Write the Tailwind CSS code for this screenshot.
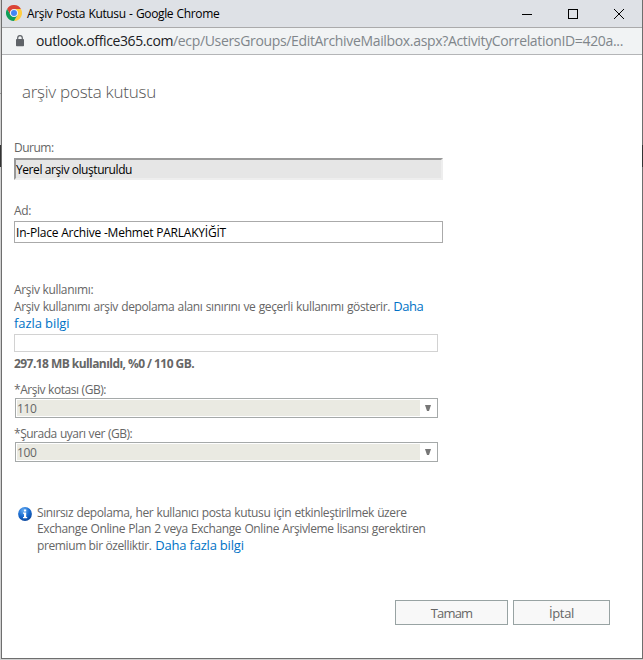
<!DOCTYPE html>
<html lang="tr">
<head>
<meta charset="utf-8">
<title>Arşiv Posta Kutusu</title>
<script src="https://cdn.jsdelivr.net/npm/@tailwindcss/browser@4"></script>
</head>
<body class="bg-white font-['Open_Sans','Noto_Sans',sans-serif]">
<div class="relative flex h-[660px] w-[643px] flex-col border-b border-l border-[#d0d0d0] bg-white">
  <div class="absolute top-[145px] -left-px h-[22px] w-px bg-[#333]"></div>
  <div class="absolute top-[93px] -left-px h-px w-px bg-[#999]"></div>
  <div class="absolute top-[145px] right-0 z-10 h-[22px] w-px bg-[#333]"></div>
  <div class="flex h-[659px] w-[642px] flex-col border-x border-b border-[#6e6e6e]">
    <header class="flex h-[28px] shrink-0 items-start border-b border-[#aaaaab] bg-[#dee1e6] pl-1">
      <svg class="mt-[5px] h-4 w-4 shrink-0" viewBox="0 0 48 48">
        <path fill="#db4437" d="M3.2 12A24 24 0 0 1 44.8 12H24A12 12 0 0 0 13.6 30Z"/>
        <path fill="#ffcd40" d="M44.8 12A24 24 0 0 1 24 48L34.4 30A12 12 0 0 0 24 12Z"/>
        <path fill="#0f9d58" d="M24 48A24 24 0 0 1 3.2 12L13.6 30A12 12 0 0 0 34.4 30Z"/>
        <circle cx="24" cy="24" r="11.5" fill="#f1f1f1"/>
        <circle cx="24" cy="24" r="9" fill="#4285f4"/>
      </svg>
      <h1 class="mt-[6px] ml-[5px] grow text-[12px] leading-4 tracking-[-0.36px] [word-spacing:0.6px] whitespace-nowrap text-black">Arşiv Posta Kutusu - Google Chrome</h1>
      <svg class="mt-2 mr-[17px] h-3 w-[104px] shrink-0" viewBox="0 0 104 12" fill="none" stroke="#000">
        <path d="M1 6.5H11M47.5 1.5H56.5V10.5H47.5Z" shape-rendering="crispEdges"/>
        <path d="M93 1L103 11M103 1L93 11"/>
      </svg>
    </header>
    <div class="flex h-[27px] shrink-0 items-start border-b border-[#b4b5b7] bg-[#f1f3f4] text-[14px] leading-5 whitespace-nowrap">
      <svg class="mt-[7px] ml-[14px] h-[12px] w-[8px] shrink-0" viewBox="0 0 8 12">
        <path d="M1.7 5V3A2.3 2.3 0 0 1 6.3 3V5" fill="none" stroke="#5f6368" stroke-width="1.2"/>
        <rect y="4" width="8" height="7.3" rx=".8" fill="#5f6368"/>
      </svg>
      <span class="mt-[3px] ml-3 w-[137px] tracking-[-0.387px] text-[#202124]">outlook.office365.com</span>
      <span class="mt-[3px] tracking-[-0.338px] text-[#80868b]">/ecp/UsersGroups/EditArchiveMailbox.aspx?ActivityCorrelationID=420a...</span>
    </div>
    <main class="flex grow flex-col pl-3 text-[12px] leading-4 tracking-[-0.32px] whitespace-nowrap text-[#666]">
      <h2 class="mt-[25px] ml-2 h-6 text-[17px] leading-6 font-light tracking-[-0.259px] text-[#555]">arşiv posta kutusu</h2>
      <label class="mt-[36px] h-[18px] tracking-[-0.5px]">Durum:</label>
      <div class="h-[22px] w-[429px] border-2 border-t-[#999] border-r-[#eee] border-b-[#eee] border-l-[#999] bg-[#e6e6e6] pt-[2px] leading-4 tracking-[-0.418px] text-black">Yerel arşiv oluşturuldu</div>
      <label class="mt-[23px] h-[18px]">Ad:</label>
      <div class="h-[22px] w-[429px] border border-[#aaa] pt-[3px] pl-px tracking-[-0.215px] text-black">In-Place Archive -Mehmet PARLAKYİĞİT</div>
      <div class="mt-[39px] h-4">Arşiv kullanımı:</div>
      <div class="h-[17px] tracking-[-0.37px] [word-spacing:0.5px]">Arşiv kullanımı arşiv depolama alanı sınırını ve geçerli kullanımı gösterir. <a class="text-[13px] tracking-[-0.45px] text-[#0072c6]">Daha</a></div>
      <a class="h-[19px] text-[13px] tracking-[-0.085px] text-[#0072c6]">fazla bilgi</a>
      <div class="h-[18px] w-[424px] border border-[#d2d2d2]"></div>
      <div class="mt-1 h-[26px] font-bold tracking-[-0.558px]">297.18 MB kullanıldı, %0 / 110 GB.</div>
      <label class="h-4 tracking-[-0.48px] [word-spacing:0.5px]">*Arşiv kotası (GB):</label>
      <div class="ml-px flex h-5 w-[423px] border border-[#a5a9a9] p-px">
        <span class="w-[403px] bg-[#eaeae2] text-[12px] leading-[17px] tracking-[-0.4px]">110</span>
        <svg class="mt-[5px] ml-[5px] h-[6px] w-[6px]" viewBox="0 0 6 6"><path fill="#777" d="M0 0H6L4 6H2Z"/></svg>
      </div>
      <label class="mt-2 h-4 tracking-[-0.48px] [word-spacing:0.5px]">*Şurada uyarı ver (GB):</label>
      <div class="ml-px flex h-5 w-[423px] border border-[#a5a9a9] p-px">
        <span class="w-[403px] bg-[#eaeae2] text-[12px] leading-[17px] tracking-[-0.4px]">100</span>
        <svg class="mt-[5px] ml-[5px] h-[6px] w-[6px]" viewBox="0 0 6 6"><path fill="#777" d="M0 0H6L4 6H2Z"/></svg>
      </div>
      <div class="mt-[43px] flex pl-1">
        <svg class="mt-[2px] h-[14px] w-[14px]" viewBox="0 0 14 14">
          <defs><radialGradient id="blue" cx="40%" cy="25%" r="75%"><stop offset="0" stop-color="#6aaef2"/><stop offset=".55" stop-color="#1b6ed2"/><stop offset="1" stop-color="#0c49a0"/></radialGradient></defs>
          <circle cx="7" cy="7" r="6.9" fill="url(#blue)"/>
          <path fill="#fff" d="M6 2.5H8.2V4.5H6ZM5 5.6H8.2V10H9.2V11.2H5V10H6V6.7H5Z"/>
        </svg>
        <div class="ml-[5px]">
          <div class="h-4 tracking-[-0.38px] [word-spacing:0.45px]">Sınırsız depolama, her kullanıcı posta kutusu için etkinleştirilmek üzere</div>
          <div class="h-4 tracking-[-0.38px] [word-spacing:0.45px]">Exchange Online Plan 2 veya Exchange Online Arşivleme lisansı gerektiren</div>
          <div class="h-4 tracking-[-0.389px]">premium bir özelliktir. <a class="ml-px text-[13px] tracking-[-0.198px] text-[#0072c6]">Daha fazla bilgi</a></div>
        </div>
      </div>
      <div class="mt-[47px] flex gap-[5px] pl-[381px] text-center text-[13px] tracking-[-0.3px]">
        <button class="h-[25px] w-[113px] border border-[#98a3a3] bg-[#f8f8f8] pt-px leading-[23px] tracking-[-0.8px]">Tamam</button>
        <button class="h-[25px] w-[97px] border border-[#98a3a3] bg-[#f8f8f8] pt-px leading-[23px]">İptal</button>
      </div>
    </main>
  </div>
</div>
</body>
</html>
